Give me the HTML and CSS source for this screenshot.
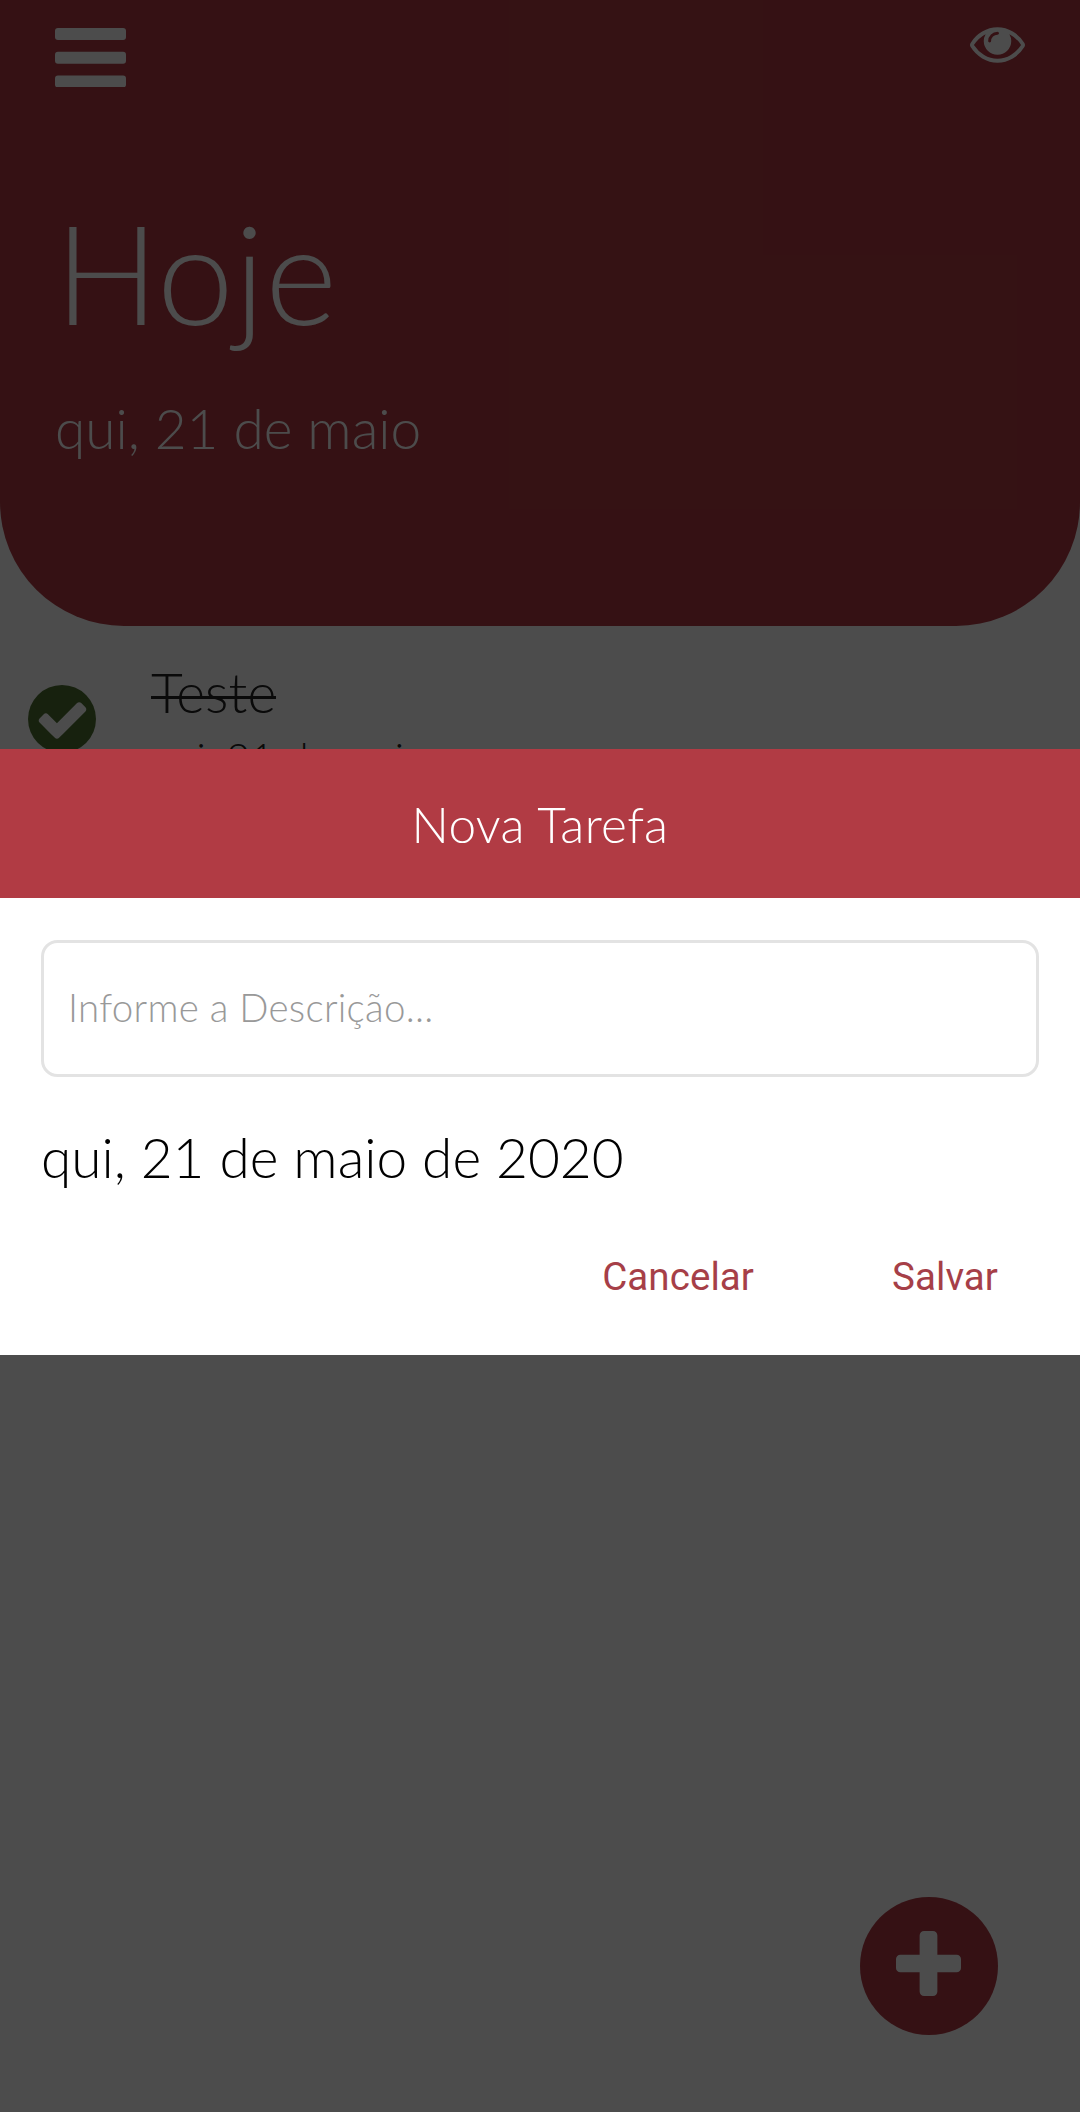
FILE: index.html
```html
<!DOCTYPE html>
<html lang="pt-BR">
<head>
<meta charset="utf-8">
<title>Tarefas</title>
<link rel="stylesheet" href="styles.css">
</head>
<body>
<main class="screen">
  <header class="hero">
    <div class="icon-bar">
      <svg class="bars" viewBox="0 0 1536 1280" preserveAspectRatio="none"><rect width="1536" height="256" rx="64"/><rect y="512" width="1536" height="256" rx="64"/><rect y="1024" width="1536" height="256" rx="64"/></svg>
      <svg class="eye" viewBox="0 384 1792 1152"><path d="M1664 960q-152-236-381-353 61 104 61 225 0 185-131.500 316.500t-316.500 131.500-316.500-131.500-131.500-316.500q0-121 61-225-229 117-381 353 133 205 333.500 326.500t434.500 121.500 434.500-121.500 333.500-326.500zm-720-384q0-20-14-34t-34-14q-125 0-214.500 89.500t-89.500 214.500q0 20 14 34t34 14 34-14 14-34q0-86 61-147t147-61q20 0 34-14t14-34zm848 384q0 34-20 69-140 230-376.500 368.500t-499.500 138.500-499.500-139-376.500-368q-20-35-20-69t20-69q140-229 376.500-368t499.500-139 499.500 139 376.500 368q20 35 20 69z"/></svg>
    </div>
    <h1 class="title">Hoje</h1>
    <p class="subtitle">qui, 21 de maio</p>
  </header>
  <section class="task">
    <div class="done"><svg class="check" viewBox="0 0 1792 1792"><path d="M1671 566q0 40-28 68l-724 724-136 136q-28 28-68 28t-68-28l-136-136-362-362q-28-28-28-68t28-68l136-136q28-28 68-28t68 28l294 295 656-657q28-28 68-28t68 28l136 136q28 28 28 68z"/></svg></div>
    <div class="task-text">
      <p class="task-name">Teste</p>
      <p class="task-date">qui, 21 de maio</p>
    </div>
  </section>
  <button class="add" aria-label="Adicionar"><svg class="plus" viewBox="192 128 1408 1408"><path d="M1600 736v192q0 40-28 68t-68 28h-416v416q0 40-28 68t-68 28h-192q-40 0-68-28t-28-68v-416h-416q-40 0-68-28t-28-68v-192q0-40 28-68t68-28h416v-416q0-40 28-68t68-28h192q40 0 68 28t28 68v416h416q40 0 68 28t28 68z"/></svg></button>
</main>
<div class="overlay">
  <section class="modal">
    <h2 class="modal-title">Nova Tarefa</h2>
    <input class="field" type="text" placeholder="Informe a Descrição...">
    <p class="modal-date">qui, 21 de maio de 2020</p>
    <div class="actions"><button class="action">Cancelar</button><button class="action">Salvar</button></div>
  </section>
</div>
</body>
</html>
```
FILE: styles.css
```css
* { box-sizing: border-box; margin: 0; padding: 0; }
body { width: 1080px; height: 2112px; overflow: hidden; background: #fff; font-family: Lato, sans-serif; font-weight: 300; position: relative; }
svg { display: block; fill: #fff; }
button { border: 0; background: none; }
.screen { height: 2112px; }
.hero { height: 626px; padding: 27px 55px 0; background: #b13b44; border-radius: 0 0 124px 124px; color: #fff; }
.icon-bar { display: flex; justify-content: space-between; align-items: flex-start; height: 162px; }
.bars { width: 71px; height: 59.5px; margin-top: .7px; }
.eye { width: 55px; height: 36px; }
.title { font-size: 137.5px; line-height: 165px; font-weight: 300; letter-spacing: .4px; }
.subtitle { margin-top: 41px; font-size: 55px; line-height: 66px; }
.task { display: flex; align-items: flex-start; padding: 32px 28px 0; }
.done { width: 68px; height: 68px; margin-top: 27px; border-radius: 50%; background: #4d7031; display: flex; justify-content: center; align-items: center; }
.check { width: 55px; height: 55px; }
.task-text { margin-left: 55px; color: #222; }
.task-name { position: relative; width: fit-content; padding-top: 1px; font-size: 55px; line-height: 66px; letter-spacing: .15px; }
.task-name::after { content: ""; position: absolute; left: 0; right: 0; top: 38px; height: 3px; background: #222; }
.task-date { margin-top: 7px; font-size: 41.25px; line-height: 50px; letter-spacing: .1px; }
.add { position: absolute; right: 82px; bottom: 77px; width: 138px; height: 138px; border-radius: 50%; background: #b13b44; }
.plus { width: 65px; height: 65px; margin: -5px 0 0 36px; }
.overlay { position: absolute; inset: 0; padding-top: 749px; background: rgba(0, 0, 0, .7); }
.modal { height: 606px; background: #fff; }
.modal-title { height: 149px; background: #b13b44; color: #fff; text-align: center; font-size: 49.5px; line-height: 151px; font-weight: 300; letter-spacing: .35px; }
.field { display: block; width: 998px; height: 137px; margin: 42px 41px 0; padding: 0 24px 4px; border: 3px solid #e3e3e3; border-radius: 16.5px; font: 300 38.5px Lato, sans-serif; letter-spacing: .26px; }
.field::placeholder { color: #999; opacity: 1; }
.modal-date { margin: 47px 41px 0; font-size: 55px; line-height: 66px; color: #000; }
.actions { display: flex; justify-content: flex-end; gap: 138px; margin: 64px 82px 0 0; }
.action { font: 400 38.5px/46px Roboto, sans-serif; color: #a63f48; letter-spacing: .08px; }
```
